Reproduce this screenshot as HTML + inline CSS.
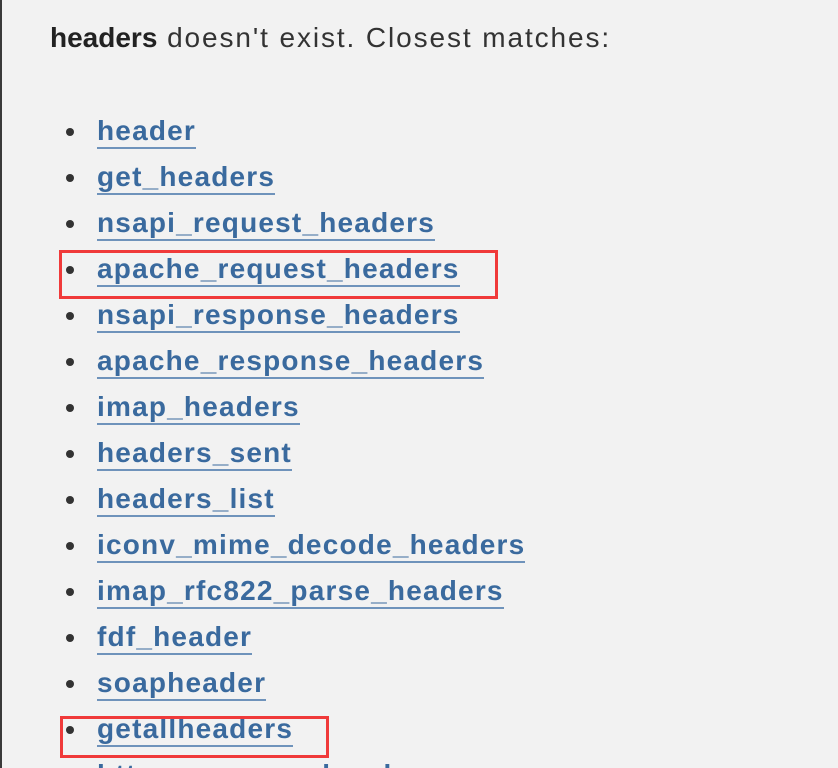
<!DOCTYPE html>
<html><head><meta charset="utf-8"><style>
html,body{margin:0;padding:0;overflow:hidden;width:838px;height:768px;}
body{background:#f2f2f2;position:relative;font-family:"Liberation Sans",sans-serif;}
.lb{position:absolute;left:0;top:0;width:2px;height:768px;background:#3a3a3a;}
.h{position:absolute;left:50px;top:22px;font-size:28px;color:#333;letter-spacing:1.9px;white-space:nowrap;}
.h b{color:#222;letter-spacing:0px;}
.it{position:absolute;left:97px;height:32px;font-size:28px;font-weight:bold;color:#3a6a9e;white-space:nowrap;letter-spacing:1.2px;line-height:32px;}
.it span{display:inline-block;border-bottom:2px solid #6f93bb;line-height:32px;padding-bottom:0px;}
.d{position:absolute;left:66px;width:8px;height:8px;border-radius:50%;background:#333;}
.box{position:absolute;border:3px solid #f03a3a;box-sizing:border-box;}
</style></head><body>
<div class="lb"></div>
<div class="h"><b>headers</b> doesn't exist. Closest matches:</div>

<div class="d" style="top:128px"></div><div class="it" style="top:115px"><span>header</span></div>
<div class="d" style="top:174px"></div><div class="it" style="top:161px"><span>get_headers</span></div>
<div class="d" style="top:220px"></div><div class="it" style="top:207px"><span>nsapi_request_headers</span></div>
<div class="d" style="top:266px"></div><div class="it" style="top:253px"><span>apache_request_headers</span></div>
<div class="d" style="top:312px"></div><div class="it" style="top:299px"><span>nsapi_response_headers</span></div>
<div class="d" style="top:358px"></div><div class="it" style="top:345px"><span>apache_response_headers</span></div>
<div class="d" style="top:404px"></div><div class="it" style="top:391px"><span>imap_headers</span></div>
<div class="d" style="top:450px"></div><div class="it" style="top:437px"><span>headers_sent</span></div>
<div class="d" style="top:496px"></div><div class="it" style="top:483px"><span>headers_list</span></div>
<div class="d" style="top:542px"></div><div class="it" style="top:529px"><span>iconv_mime_decode_headers</span></div>
<div class="d" style="top:588px"></div><div class="it" style="top:575px"><span>imap_rfc822_parse_headers</span></div>
<div class="d" style="top:634px"></div><div class="it" style="top:621px"><span>fdf_header</span></div>
<div class="d" style="top:680px"></div><div class="it" style="top:667px"><span>soapheader</span></div>
<div class="d" style="top:726px"></div><div class="it" style="top:713px"><span>getallheaders</span></div>
<div class="it" style="top:759px"><span>http_response_header</span></div>

<div class="box" style="left:59px;top:250px;width:439px;height:49px"></div>
<div class="box" style="left:60px;top:716px;width:269px;height:42px"></div>
</body></html>
